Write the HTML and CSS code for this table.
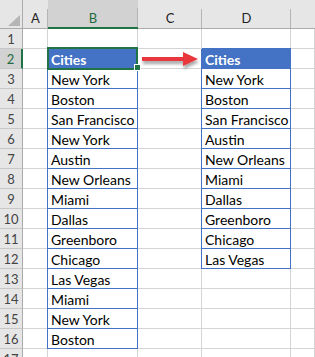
FILE: index.html
```html
<!DOCTYPE html>
<html>
<head>
<meta charset="utf-8">
<link rel="stylesheet" href="styles.css">
</head>
<body>
<div class="sheet">
  <div class="corner"><svg class="tri" width="14" height="12" viewBox="0 0 14 12"><polygon points="13,0 13,11 1,11" fill="#b5b5b5"/></svg></div>
  <div class="ch">A</div>
  <div class="ch sel">B</div>
  <div class="ch">C</div>
  <div class="ch">D</div>
  <div class="ch last"></div>

  <div class="rh">1</div><div class="c"></div><div class="c"></div><div class="c"></div><div class="c"></div><div class="c"></div>

  <div class="rh sel">2</div><div class="c"></div><div class="c fill active">Cities<span class="handle"></span></div><div class="c"></div><div class="c fill">Cities</div><div class="c"></div>

  <div class="rh">3</div><div class="c"></div><div class="c bx">New York</div><div class="c"></div><div class="c bx">New York</div><div class="c"></div>
  <div class="rh">4</div><div class="c"></div><div class="c bx">Boston</div><div class="c"></div><div class="c bx">Boston</div><div class="c"></div>
  <div class="rh">5</div><div class="c"></div><div class="c bx">San Francisco</div><div class="c"></div><div class="c bx">San Francisco</div><div class="c"></div>
  <div class="rh">6</div><div class="c"></div><div class="c bx">New York</div><div class="c"></div><div class="c bx">Austin</div><div class="c"></div>
  <div class="rh">7</div><div class="c"></div><div class="c bx">Austin</div><div class="c"></div><div class="c bx">New Orleans</div><div class="c"></div>
  <div class="rh">8</div><div class="c"></div><div class="c bx">New Orleans</div><div class="c"></div><div class="c bx">Miami</div><div class="c"></div>
  <div class="rh">9</div><div class="c"></div><div class="c bx">Miami</div><div class="c"></div><div class="c bx">Dallas</div><div class="c"></div>
  <div class="rh">10</div><div class="c"></div><div class="c bx">Dallas</div><div class="c"></div><div class="c bx">Greenboro</div><div class="c"></div>
  <div class="rh">11</div><div class="c"></div><div class="c bx">Greenboro</div><div class="c"></div><div class="c bx">Chicago</div><div class="c"></div>
  <div class="rh">12</div><div class="c"></div><div class="c bx">Chicago</div><div class="c"></div><div class="c bx">Las Vegas</div><div class="c"></div>
  <div class="rh">13</div><div class="c"></div><div class="c bx">Las Vegas</div><div class="c"></div><div class="c"></div><div class="c"></div>
  <div class="rh">14</div><div class="c"></div><div class="c bx">Miami</div><div class="c"></div><div class="c"></div><div class="c"></div>
  <div class="rh">15</div><div class="c"></div><div class="c bx">New York</div><div class="c"></div><div class="c"></div><div class="c"></div>
  <div class="rh">16</div><div class="c"></div><div class="c bx">Boston</div><div class="c"></div><div class="c"></div><div class="c"></div>
  <div class="rh">17</div><div class="c"></div><div class="c"></div><div class="c"></div><div class="c"></div><div class="c"></div>
</div>

<svg class="arrow" width="66" height="28" viewBox="0 0 66 28">
  <defs>
    <filter id="sh" x="-20%" y="-40%" width="140%" height="200%">
      <feDropShadow dx="1" dy="3" stdDeviation="1.6" flood-color="#000" flood-opacity="0.35"/>
    </filter>
  </defs>
  <g filter="url(#sh)">
    <rect x="2" y="9" width="42" height="4" fill="#e8393e"/>
    <polygon points="43,4 58,11 43,18" fill="#e8393e"/>
  </g>
</svg>
</body>
</html>
```

FILE: styles.css
```css
html, body {
  margin: 0;
  padding: 0;
  background: #ffffff;
}

body {
  position: relative;
  width: 315px;
  height: 357px;
  overflow: hidden;
  font-family: Lato, "Open Sans", sans-serif;
}

.sheet {
  display: grid;
  width: 315px;
  grid-template-columns: 23px 25px 90px 64px 89px 1fr;
  grid-template-rows: 29px repeat(17, 20px);
}

.sheet > div {
  box-sizing: border-box;
  min-width: 0;
}

.corner {
  position: relative;
  background: #e6e6e6;
  border-right: 1px solid #ababab;
  border-bottom: 1px solid #ababab;
}

.tri {
  position: absolute;
  right: 1px;
  bottom: 1px;
}

.ch {
  display: flex;
  align-items: center;
  justify-content: center;
  padding-top: 8px;
  font-size: 13px;
  color: #222;
  background: linear-gradient(#b4b4b4, #b4b4b4) right bottom / 1px 19px no-repeat, #e6e6e6;
  border-bottom: 1px solid #ababab;
}

.ch.sel {
  background: linear-gradient(#b4b4b4, #b4b4b4) right bottom / 1px 19px no-repeat, #d2d2d2;
  border-bottom: 2px solid #217346;
  color: #1e6b3f;
}

.ch.last {
  background: #e6e6e6;
}

.rh {
  display: flex;
  align-items: center;
  justify-content: center;
  padding-top: 1px;
  font-size: 13px;
  color: #444;
  background: #e6e6e6;
  border-right: 1px solid #ababab;
  border-bottom: 1px solid #c8c8c8;
}

.rh.sel {
  background: #d2d2d2;
  border-right: 2px solid #217346;
  color: #1e6b3f;
}

.c {
  display: flex;
  align-items: flex-end;
  padding: 0 2px 0 3px;
  font-size: 14px;
  line-height: 17px;
  color: #000;
  white-space: nowrap;
  border-right: 1px solid #d4d4d4;
  border-bottom: 1px solid #d4d4d4;
}

.bx {
  border-right-color: #4472c4;
  border-bottom-color: #4472c4;
  box-shadow: -1px 0 0 #4472c4;
}

.fill {
  background: #4472c4;
  color: #ffffff;
  font-weight: bold;
  border-right-color: #4472c4;
  border-bottom-color: #4472c4;
  box-shadow: -1px 0 0 #4472c4, 0 -1px 0 #4472c4;
}

.active {
  position: relative;
}

.active::after {
  content: "";
  position: absolute;
  left: -1px;
  top: -2px;
  right: -1px;
  bottom: -2px;
  border: 2px solid #217346;
}

.handle {
  position: absolute;
  right: -4px;
  bottom: -3px;
  width: 5px;
  height: 5px;
  background: #217346;
  border: 1px solid #ffffff;
  z-index: 1;
}

.arrow {
  position: absolute;
  left: 140px;
  top: 48px;
}
```
